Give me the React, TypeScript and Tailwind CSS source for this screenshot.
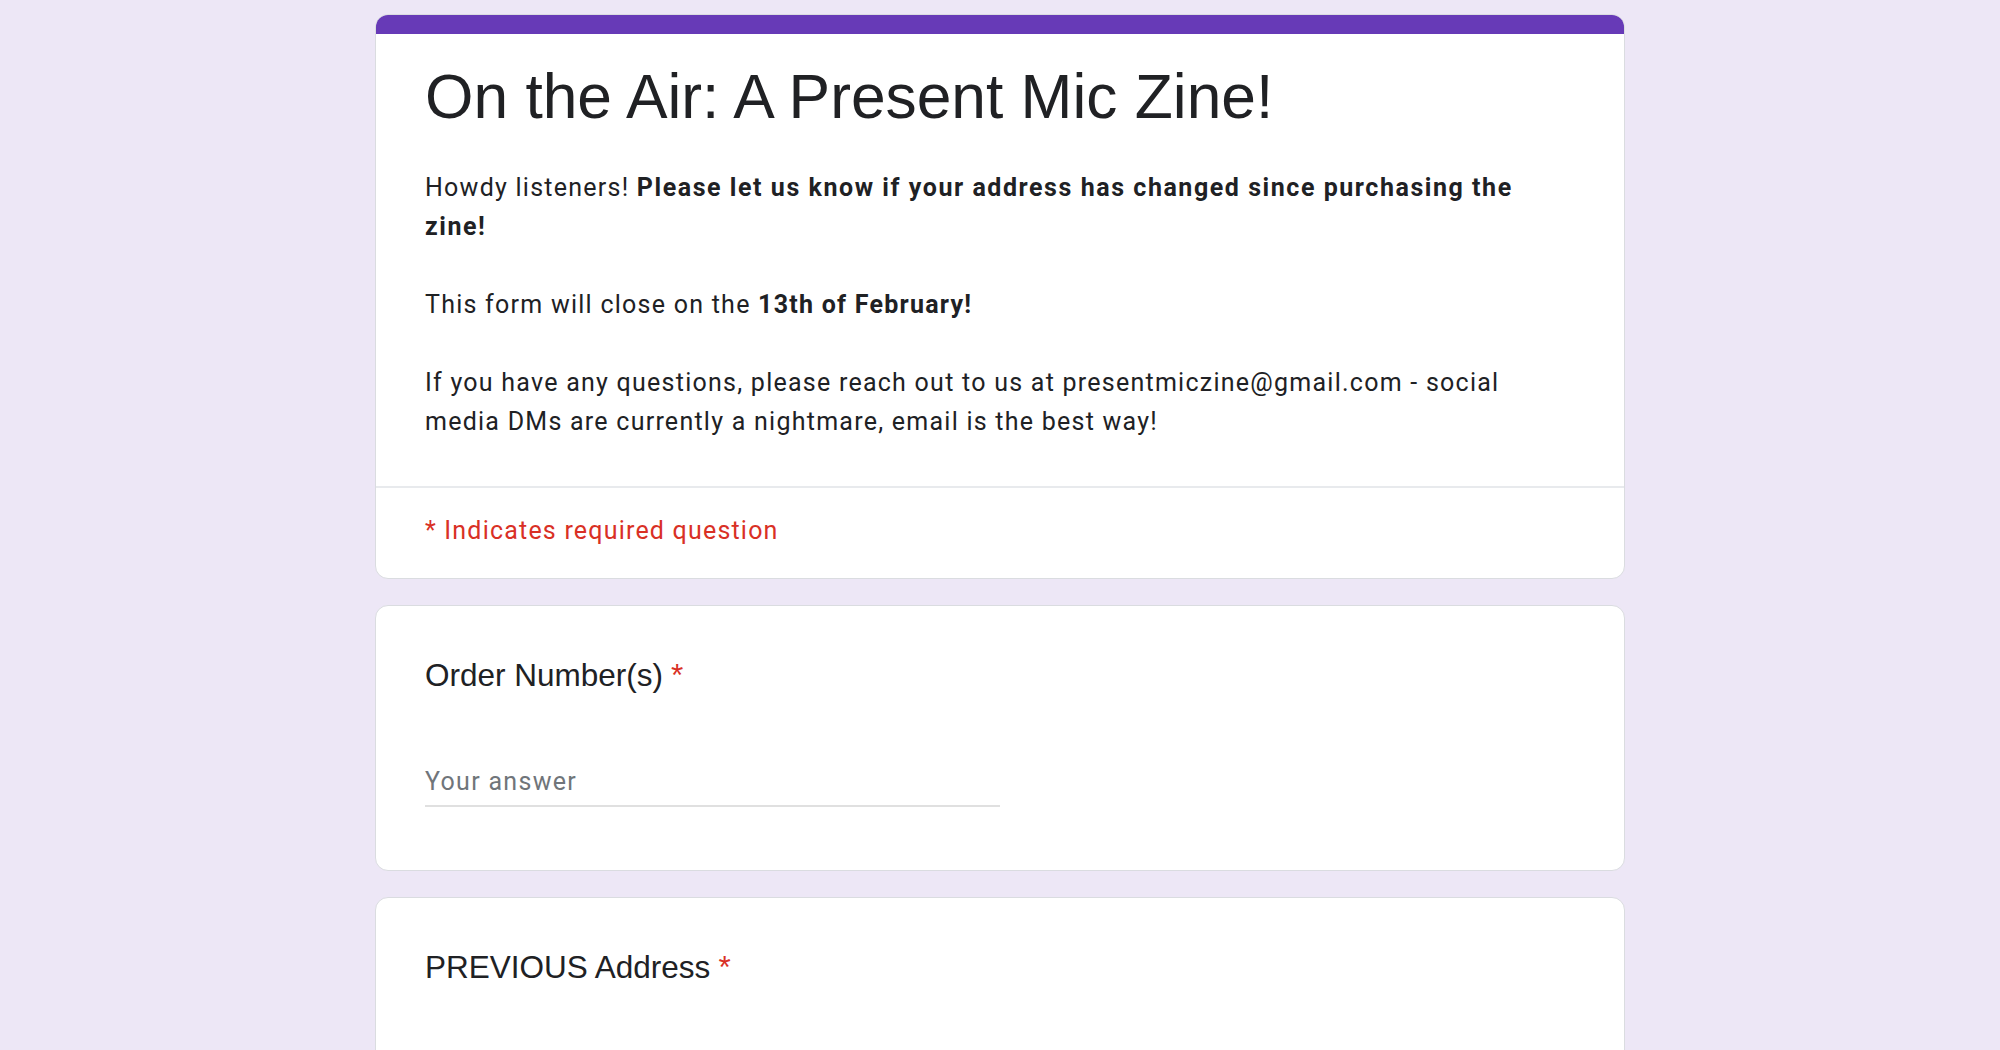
import React from "react";

function Required() {
  return <span className="ml-[8px] text-[#d93025]">*</span>;
}

function AnswerField() {
  return (
    <div className="mt-[60px] w-[575px] border-b-2 border-[#e0e0e0] pb-[5px] text-[25px] leading-[36px] tracking-[1.3px] text-[#70757a]">
      Your answer
    </div>
  );
}

function QuestionCard({ title, children }: { title: string; children?: React.ReactNode }) {
  return (
    <div className="rounded-[13px] border border-[#dadce0] bg-white px-[49px] pb-[63px] pt-[40px]">
      <div className="font-['Liberation_Sans',Arial,sans-serif] text-[31.5px] leading-[58px] text-[#202124]">
        {title}
        <Required />
      </div>
      {children}
    </div>
  );
}

export default function App() {
  return (
    <div className="min-h-screen bg-[#ede7f6] pt-[14px] font-['Roboto',sans-serif]">
      <div className="mx-auto flex w-[1250px] flex-col gap-[26px]">
        <div className="overflow-hidden rounded-[13px] border border-[#dadce0] bg-white">
          <div className="-mx-px -mt-px h-[20px] bg-[#673ab7]" />
          <div className="px-[49px] pb-[45px] pt-[20px]">
            <h1 className="font-['Liberation_Sans',Arial,sans-serif] text-[62.3px] leading-[86px] text-[#202124]">
              On the Air: A Present Mic Zine!
            </h1>
            <div className="mt-[28px] text-[25px] leading-[39px] tracking-[1.25px] text-[#202124]">
              <p>
                Howdy listeners!{" "}
                <span className="font-bold tracking-[1.55px]">
                  Please let us know if your address has changed since purchasing the zine!
                </span>
              </p>
              <p className="mt-[39px]">
                This form will close on the <span className="font-bold">13th of February!</span>
              </p>
              <p className="mt-[39px]">
                If you have any questions, please reach out to us at presentmiczine@gmail.com - social
                media DMs are currently a nightmare, email is the best way!
              </p>
            </div>
          </div>
          <div className="border-t-2 border-[#e8eaed] px-[49px] pb-[31px] pt-[27px] text-[25px] leading-[32px] tracking-[1.2px] text-[#d93025]">
            * Indicates required question
          </div>
        </div>

        <QuestionCard title="Order Number(s)">
          <AnswerField />
        </QuestionCard>

        <QuestionCard title="PREVIOUS Address">
          <AnswerField />
        </QuestionCard>
      </div>
    </div>
  );
}
